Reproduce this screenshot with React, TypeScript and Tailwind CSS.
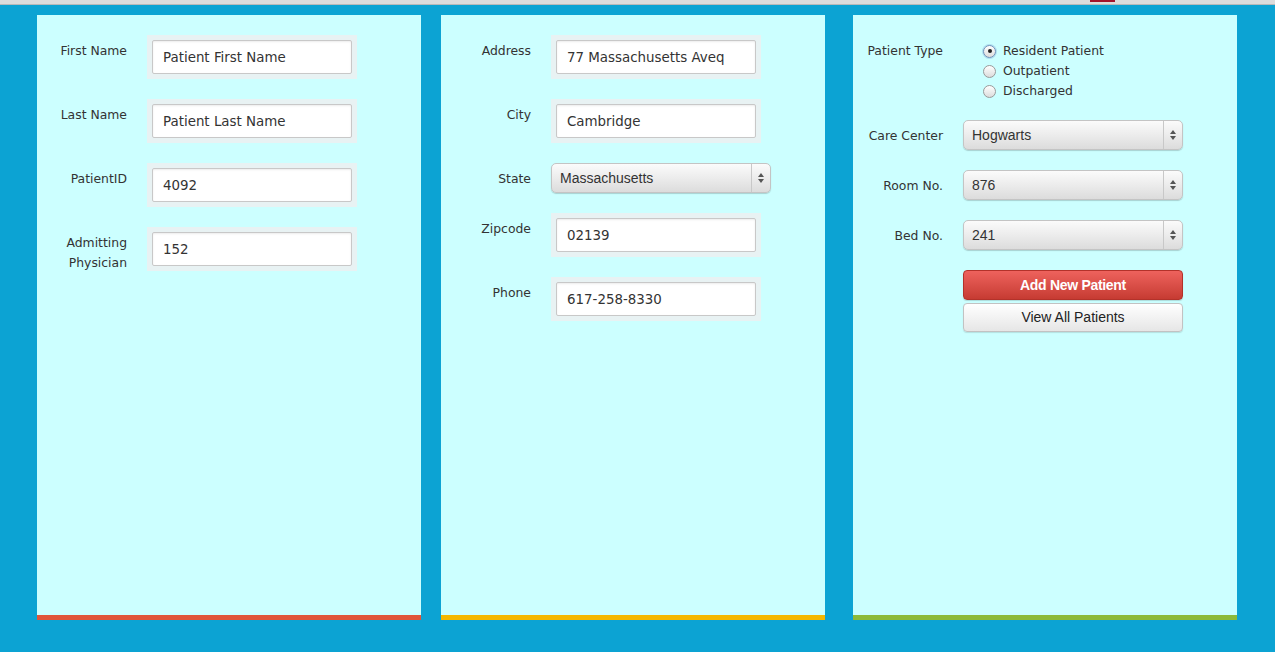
import React from "react";

const labelCls =
  "w-[90px] shrink-0 text-right text-[12.4px] leading-[20px] text-[#333]";
const fontLabel = { fontFamily: '"DejaVu Sans", Verdana, sans-serif' };

function TextRow({ label, value }: { label: string; value: string }) {
  return (
    <div className="flex items-start mb-[20px]">
      <div className={labelCls + " pt-[6px]"} style={fontLabel}>
        {label}
      </div>
      <div className="ml-[20px] p-[5px] bg-[#e8f2f3]">
        <div
          className="w-[200px] h-[34px] bg-white border border-[#c8c8c8] rounded-[2px] shadow-[inset_0_1px_2px_rgba(0,0,0,0.08)] flex items-center pl-[10px] pt-[2px] text-[13.4px] text-[#333]"
          style={fontLabel}
        >
          {value}
        </div>
      </div>
    </div>
  );
}

function Arrows() {
  return (
    <svg width="8" height="12" viewBox="0 0 8 12">
      <path d="M4 1 L7 5 L1 5 Z" fill="#555" />
      <path d="M4 11 L7 7 L1 7 Z" fill="#555" />
    </svg>
  );
}

function SelectBox({ value }: { value: string }) {
  return (
    <div
      className="w-[220px] h-[30px] rounded-[5px] border border-[#c4c4c4] bg-gradient-to-b from-[#fbfbfb] via-[#ececec] to-[#dcdcdc] shadow-[0_1px_1px_rgba(0,0,0,0.18)] flex items-center text-[14px] text-[#333]"
      style={{ fontFamily: '"Liberation Sans", Arial, sans-serif' }}
    >
      <div className="flex-1 pl-[8px]">{value}</div>
      <div className="w-[19px] h-full border-l border-[#c8c8c8] flex items-center justify-center">
        <Arrows />
      </div>
    </div>
  );
}

function SelectRow({ label, value, mb = "mb-[20px]" }: { label: string; value: string; mb?: string }) {
  return (
    <div className={"flex items-center " + mb}>
      <div className={labelCls + " pt-[1px]"} style={fontLabel}>
        {label}
      </div>
      <div className="ml-[20px]">
        <SelectBox value={value} />
      </div>
    </div>
  );
}

function Radio({ checked, label }: { checked?: boolean; label: string }) {
  return (
    <div className="flex items-center h-[20px]">
      <div
        className={
          "w-[13px] h-[13px] rounded-full border flex items-center justify-center bg-gradient-to-b from-[#ffffff] to-[#dcdcdc] " +
          (checked
            ? "border-[#6f8fb8] shadow-[0_0_0_1px_rgba(120,160,210,0.35)]"
            : "border-[#9a9a9a]")
        }
      >
        {checked && <div className="w-[4px] h-[4px] rounded-full bg-[#222]" />}
      </div>
      <span className="ml-[7px] text-[12.4px] text-[#333]" style={fontLabel}>
        {label}
      </span>
    </div>
  );
}

export default function App() {
  return (
    <div className="w-[1275px] h-[652px] bg-[#0ca3d3] overflow-hidden">
      <div className="h-[5px] bg-[#dcdcdc] border-b border-[#b9b9b9] flex">
        <div className="ml-[1090px] w-[25px] h-[2px] bg-[#a3112b]" />
      </div>
      <div className="flex pl-[37px] pt-[10px]">
        {/* Panel 1 */}
        <div className="w-[384px] h-[605px] bg-[#ccffff] border-b-[5px] border-[#e0553a] pt-[20px]">
          <TextRow label="First Name" value="Patient First Name" />
          <TextRow label="Last Name" value="Patient Last Name" />
          <TextRow label="PatientID" value="4092" />
          <TextRow label="Admitting Physician" value="152" />
        </div>
        {/* Panel 2 */}
        <div className="ml-[20px] w-[384px] h-[605px] bg-[#ccffff] border-b-[5px] border-[#f5b700] pt-[20px]">
          <TextRow label="Address" value="77 Massachusetts Aveq" />
          <TextRow label="City" value="Cambridge" />
          <SelectRow label="State" value="Massachusetts" />
          <TextRow label="Zipcode" value="02139" />
          <TextRow label="Phone" value="617-258-8330" />
        </div>
        {/* Panel 3 */}
        <div className="ml-[28px] w-[384px] h-[605px] bg-[#ccffff] border-b-[5px] border-[#8dba39] pt-[26px]">
          <div className="flex items-start mb-[19px]">
            <div className={labelCls} style={fontLabel}>
              Patient Type
            </div>
            <div className="ml-[40px] flex flex-col">
              <Radio checked label="Resident Patient" />
              <Radio label="Outpatient" />
              <Radio label="Discharged" />
            </div>
          </div>
          <SelectRow label="Care Center" value="Hogwarts" />
          <SelectRow label="Room No." value="876" />
          <SelectRow label="Bed No." value="241" />
          <div className="ml-[110px] flex flex-col w-[220px]">
            <button
              className="h-[30px] rounded-[4px] border border-[#b3322a] bg-gradient-to-b from-[#ee625d] to-[#c63b32] text-white font-bold text-[14px] tracking-[-0.3px] shadow-[0_1px_1px_rgba(0,0,0,0.15)]"
              style={{ fontFamily: '"Liberation Sans", Arial, sans-serif' }}
            >
              Add New Patient
            </button>
            <button
              className="mt-[3px] h-[29px] rounded-[4px] border border-[#c2c2c2] bg-gradient-to-b from-[#ffffff] to-[#e6e6e6] text-[#222] text-[14px] shadow-[0_1px_1px_rgba(0,0,0,0.12)]"
              style={{ fontFamily: '"Liberation Sans", Arial, sans-serif' }}
            >
              View All Patients
            </button>
          </div>
        </div>
      </div>
    </div>
  );
}
